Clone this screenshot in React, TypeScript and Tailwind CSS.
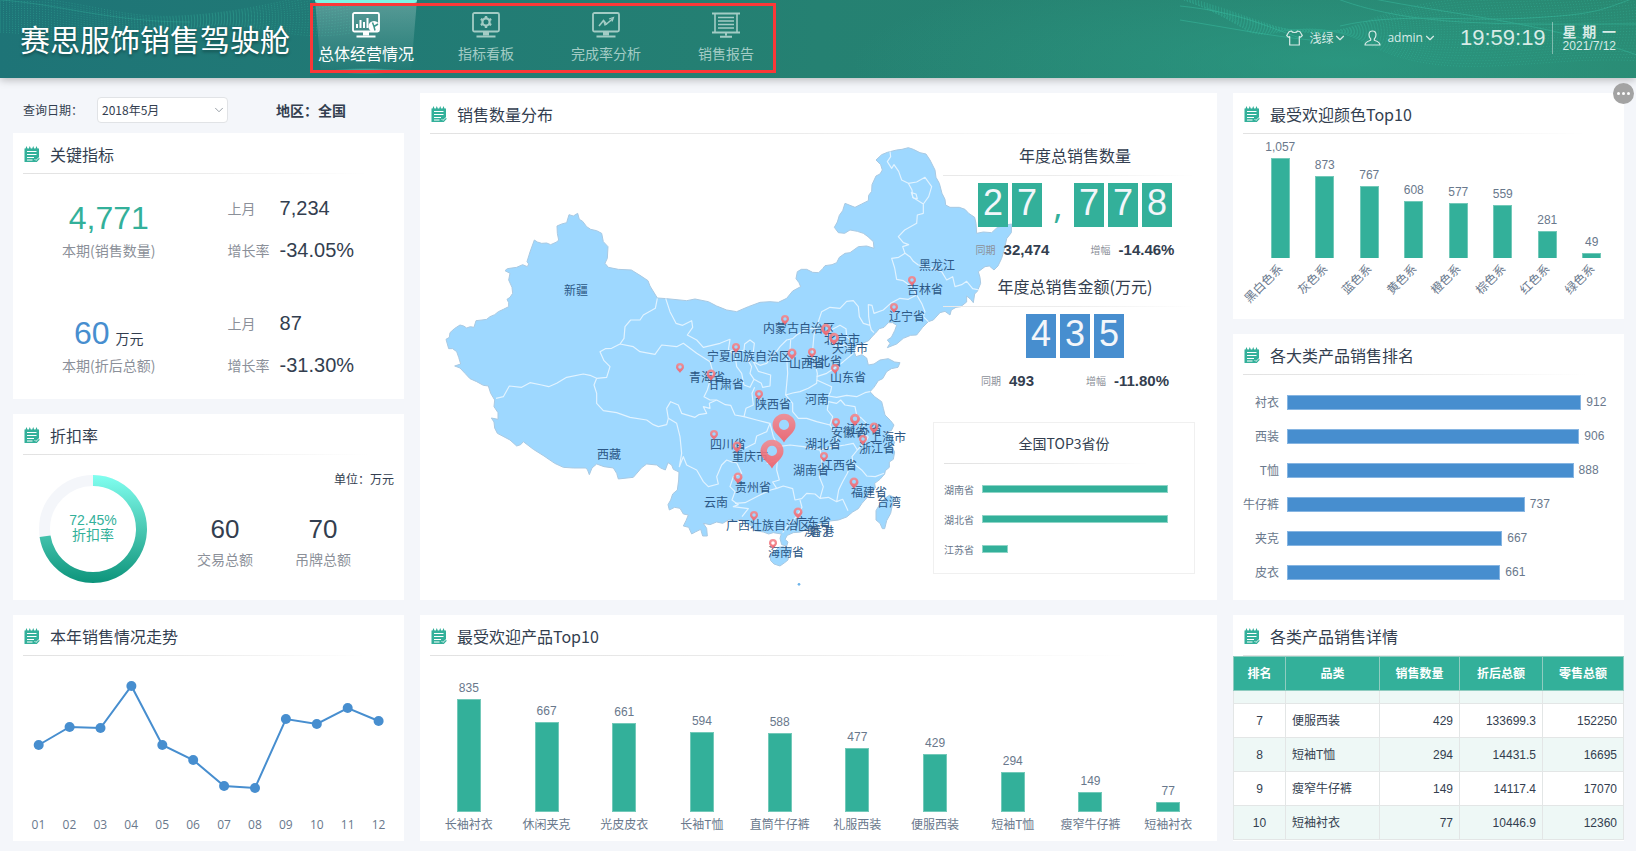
import type { ReactNode } from "react";
import { ChevronDown } from "lucide-react";

type BarItem = { name: string; value: number };

const colorSales: BarItem[] = [
  { name: "黑白色系", value: 1057 },
  { name: "灰色系", value: 873 },
  { name: "蓝色系", value: 767 },
  { name: "黄色系", value: 608 },
  { name: "橙色系", value: 577 },
  { name: "棕色系", value: 559 },
  { name: "红色系", value: 281 },
  { name: "绿色系", value: 49 },
];

const categorySales: BarItem[] = [
  { name: "衬衣", value: 912 },
  { name: "西装", value: 906 },
  { name: "T恤", value: 888 },
  { name: "牛仔裤", value: 737 },
  { name: "夹克", value: 667 },
  { name: "皮衣", value: 661 },
];

const productSales: BarItem[] = [
  { name: "长袖衬衣", value: 835 },
  { name: "休闲夹克", value: 667 },
  { name: "光皮皮衣", value: 661 },
  { name: "长袖T恤", value: 594 },
  { name: "直筒牛仔裤", value: 588 },
  { name: "礼服西装", value: 477 },
  { name: "便服西装", value: 429 },
  { name: "短袖T恤", value: 294 },
  { name: "瘦窄牛仔裤", value: 149 },
  { name: "短袖衬衣", value: 77 },
];

const topProvinces = [
  { name: "湖南省", percent: 92 },
  { name: "湖北省", percent: 92 },
  { name: "江苏省", percent: 13 },
];

const detailRows = [
  { rank: 7, name: "便服西装", count: 429, amount: "133699.3", retail: "152250" },
  { rank: 8, name: "短袖T恤", count: 294, amount: "14431.5", retail: "16695" },
  { rank: 9, name: "瘦窄牛仔裤", count: 149, amount: "14117.4", retail: "17070" },
  { rank: 10, name: "短袖衬衣", count: 77, amount: "10446.9", retail: "12360" },
];

// y position of each month on the trend line
const trend = [88, 70, 71, 29, 88, 103, 129, 131, 62, 67, 51, 64];
const months = ["01", "02", "03", "04", "05", "06", "07", "08", "09", "10", "11", "12"];

// name, x, y
const provinceLabels: [string, number, number][] = [
  ["新疆", 156, 196],
  ["西藏", 189, 360],
  ["青海省", 287, 283],
  ["甘肃省", 306, 290],
  ["宁夏回族自治区", 329, 262],
  ["内蒙古自治区", 379, 234],
  ["山西省", 387, 269],
  ["河北省", 404, 267],
  ["北京市", 422, 245],
  ["天津市", 430, 254],
  ["山东省", 428, 283],
  ["河南", 397, 305],
  ["陕西省", 353, 310],
  ["四川省", 308, 350],
  ["重庆市", 330, 362],
  ["湖北省", 403, 350],
  ["湖南省", 391, 376],
  ["江西省", 419, 371],
  ["安徽省", 429, 338],
  ["江苏省", 444, 335],
  ["上海市", 468, 343],
  ["浙江省", 457, 354],
  ["福建省", 449, 398],
  ["台湾", 469, 408],
  ["贵州省", 333, 393],
  ["云南", 296, 408],
  ["广西壮族自治区", 348, 431],
  ["广东省", 393, 428],
  ["澳门", 396, 437],
  ["香港", 402, 437],
  ["海南省", 366, 458],
  ["黑龙江", 517, 171],
  ["吉林省", 505, 195],
  ["辽宁省", 487, 222],
];

// x, y, width
const pins: [number, number, number][] = [
  [365, 227, 8],
  [316, 255, 8],
  [260, 275, 8],
  [291, 282, 9],
  [339, 302, 8],
  [294, 342, 8],
  [317, 354, 9],
  [318, 385, 9],
  [334, 423, 8],
  [378, 420, 9],
  [353, 451, 8],
  [372, 261, 9],
  [392, 260, 8],
  [406, 237, 10],
  [414, 246, 10],
  [415, 276, 8],
  [416, 330, 8],
  [435, 327, 10],
  [454, 335, 9],
  [443, 347, 8],
  [404, 364, 8],
  [434, 390, 9],
  [492, 188, 8],
  [474, 215, 8],
  [364, 335, 23],
  [352, 361, 23],
];

const mainland =
  "M78 748L88 742 90 728 103 716 120 705 131 708 140 714 151 710 162 712 168 692 186 690 200 688 210 680 224 674 235 665 250 658 266 650 266 638 261 628 270 622 278 610 276 592 266 570 270 550 255 542 262 536 290 532 308 524 322 530 326 522 321 515 330 486 343 450 352 456 365 460 380 459 392 464 410 456 416 450 412 430 411 408 425 402 440 398 447 374 460 378 473 370 478 388 488 394 500 410 512 418 530 422 545 430 550 455 564 470 562 505 555 520 565 532 595 538 634 540 660 556 684 572 690 588 712 624 740 626 800 632 825 627 865 635 890 648 920 660 950 665 985 650 1020 637 1050 635 1075 637 1100 625 1118 603 1142 590 1137 578 1128 566 1132 545 1144 538 1160 538 1178 547 1196 548 1208 536 1215 527 1236 524 1250 518 1258 502 1275 490 1290 488 1315 470 1340 468 1362 475 1360 455 1344 440 1330 430 1312 424 1290 420 1274 430 1255 428 1243 412 1252 396 1258 376 1268 362 1275 340 1290 346 1305 352 1325 342 1345 332 1346 316 1355 304 1356 284 1368 258 1380 252 1387 240 1382 224 1368 210 1385 194 1402 187 1430 180 1446 178 1465 173 1480 178 1500 188 1518 192 1530 210 1545 240 1548 262 1558 280 1566 310 1575 328 1577 345 1590 352 1618 352 1635 358 1646 370 1664 382 1668 400 1670 430 1690 426 1715 428 1730 414 1752 406 1775 402 1774 428 1760 446 1754 474 1745 505 1734 528 1722 540 1708 528 1695 530 1675 545 1680 562 1682 580 1672 604 1664 612 1660 638 1652 628 1640 618 1640 636 1622 650 1608 652 1594 660 1590 675 1575 664 1560 668 1540 690 1525 695 1508 712 1490 735 1472 736 1450 745 1430 762 1402 773 1410 760 1402 750 1414 742 1424 722 1430 706 1418 698 1405 698 1392 712 1378 716 1366 730 1356 740 1346 752 1328 760 1310 764 1302 784 1308 800 1326 794 1340 804 1345 825 1362 822 1380 810 1405 806 1424 816 1440 818 1434 832 1414 836 1400 845 1388 866 1375 872 1362 892 1350 905 1364 920 1385 935 1390 955 1395 975 1412 992 1422 1005 1414 1022 1396 1026 1412 1036 1424 1058 1416 1070 1424 1086 1420 1108 1408 1116 1408 1132 1396 1142 1394 1152 1380 1168 1364 1180 1366 1194 1348 1206 1340 1224 1326 1240 1315 1256 1298 1266 1280 1281 1256 1290 1230 1293 1214 1304 1196 1300 1180 1315 1160 1318 1142 1326 1120 1328 1102 1336 1095 1348 1104 1356 1100 1368 1085 1364 1080 1345 1084 1332 1060 1328 1046 1332 1030 1326 1005 1322 992 1306 980 1300 966 1288 945 1292 925 1290 908 1300 890 1296 870 1304 850 1300 860 1315 862 1338 848 1338 842 1318 826 1326 815 1332 806 1312 790 1308 798 1292 805 1275 790 1272 780 1255 764 1252 748 1260 744 1244 752 1230 758 1212 772 1200 776 1170 777 1146 760 1138 755 1125 744 1118 736 1140 722 1134 710 1125 680 1122 664 1134 654 1146 640 1162 595 1167 590 1150 580 1134 552 1130 530 1122 516 1134 508 1154 502 1138 496 1134 460 1134 430 1132 404 1120 372 1098 340 1078 310 1055 302 1064 290 1068 270 1050 232 1030 224 1014 222 996 214 984 234 988 234 968 222 950 224 930 212 910 205 888 190 886 170 875 150 866 135 850 120 834 104 828 122 822 116 802 110 785 98 776 86 776Z";
const hainan = "M1090 1370L1102 1376 1115 1372 1114 1388 1106 1396 1104 1410 1094 1418 1080 1428 1062 1422 1052 1412 1050 1394 1064 1384 1076 1372Z";
const taiwan = "M1395 1225L1408 1216 1424 1222 1418 1240 1412 1270 1400 1292 1394 1316 1387 1316 1380 1300 1368 1290 1368 1262 1382 1238Z";

const borders = [
  "M712 625L706 655 690 664 670 675 660 690 632 690 615 710 612 745 600 762 575 775 556 776 540 785 552 812 570 830 560 862 530 865",
  "M530 865L510 856 490 852 440 862 410 880 386 890 365 885 330 878 305 892 268 888 250 920 228 925",
  "M530 865L522 885 530 910 530 940 550 962 590 968 630 982 680 990 700 1004 715 1010 740 1004 745 985",
  "M745 985L770 1000 780 1040 785 1090 778 1130 790 1100 800 1125 830 1140 850 1175 865 1190 895 1182 890 1160 905 1125 920 1110 935 1116 950 1118",
  "M745 985L740 955 752 935 775 945 785 970 825 982 836 974 860 970 850 950 870 955 868 940 890 930",
  "M600 762L640 770 660 785 705 793 725 765 770 770 790 760 830 790 870 815 880 850 870 872 862 900 852 920 870 930 890 930",
  "M737 625L750 665 768 700 788 706 815 692 818 712 802 735 830 750 850 772 900 760 930 748 925 780 945 795 950 830 965 850 972 885 990 892 1002 868 1024 880 1028 892 1050 888 1052 855 1015 844 1000 815",
  "M890 930L916 944 932 946 945 975 972 980 978 955 1000 945 996 910 1004 892",
  "M925 780L955 786 972 780 974 762 990 750 1003 760 1000 785 985 812 995 830 990 850 1002 868",
  "M1000 815L1020 826 1040 820 1065 790 1080 770 1100 750 1118 746 1130 735 1160 716 1190 715 1196 692 1205 665 1230 652 1260 655 1280 634 1300 632 1315 650 1318 680 1330 700 1350 706 1346 680 1345 644 1356 646 1362 670 1390 660 1412 640 1440 625 1465 628 1490 615",
  "M1490 615L1475 590 1450 572 1430 568 1424 534 1415 505 1436 502 1455 490 1470 500 1480 514 1495 525",
  "M1455 490L1448 470 1466 464 1450 458 1435 440 1454 420 1490 400 1492 375 1510 370 1510 342 1478 322 1476 300 1465 280 1445 270 1436 244 1422 224 1415 235 1402 215 1412 200 1410 184",
  "M1465 280L1490 276 1515 262 1535 290 1526 320 1510 342M1474 308l14 4 4 14-12 -2z",
  "M1495 525L1530 532 1565 545 1580 570 1598 560 1605 590 1625 584 1640 574 1658 596 1678 600",
  "M1490 615L1505 640 1515 665 1510 680 1525 695",
  "M1350 706L1354 720 1362 728",
  "M1112 750L1110 780 1100 800 1103 850 1097 915 1118 909 1140 905 1165 895 1190 880 1192 850 1185 820 1178 780 1182 735 1196 700",
  "M1190 870L1235 890 1232 905 1225 918 1250 922 1280 916 1310 920 1335 908 1350 905",
  "M1190 860L1220 850 1250 830 1270 815 1300 790M1220 730l20 -14 20 -10 18 10 2 24 14 12 -4 22 -18 -10 -20 6 -22 -14z",
  "M1097 915L1118 940 1118 965 1135 985 1160 985 1190 995 1230 1005 1238 980 1222 960 1225 935 1250 940 1262 930 1275 945 1305 950 1310 975 1325 985 1340 1000 1322 1010 1330 1030 1345 1040",
  "M972 980L1010 990 1050 1000 1040 1025 1010 1038 1005 1060 975 1075",
  "M1050 1000L1060 1040 1075 1070 1110 1065 1150 1070 1175 1076 1200 1080 1245 1070 1252 1040 1230 1005",
  "M1245 1070L1275 1065 1300 1060 1312 1080 1340 1050 1345 1040M1312 1080L1296 1100 1300 1120",
  "M950 1118L965 1150 940 1160 930 1190 945 1205 936 1230 955 1244 940 1250 985 1256 966 1280",
  "M945 1240L975 1238 1020 1215 1052 1200 1070 1195 1058 1176 1078 1170 1070 1140 1072 1110 1040 1120",
  "M1070 1195L1090 1188 1118 1196 1125 1230 1145 1226 1160 1210 1185 1212 1200 1225 1210 1190 1198 1160 1206 1130 1205 1100 1200 1080",
  "M1140 1230L1146 1252 1130 1280 1108 1300 1088 1328",
  "M1200 1225L1225 1222 1250 1235 1268 1228 1284 1262M1250 1235L1256 1200 1268 1175 1282 1150 1290 1130 1300 1120 1325 1140 1340 1158 1366 1160 1392 1150",
];

const cardTitleLine = "h-px bg-linear-to-r from-[#e2e2e2] via-[#ebebeb] to-transparent";

function NoteIcon() {
  return (
    <svg viewBox="0 0 16 16" className="size-4 shrink-0" aria-hidden="true">
      <path d="M.5 2.500h1l1-2.500 1 2.500h1.300l1-2.500 1 2.500h1.400l1-2.500 1 2.500h1.300l1-2.500 1 2.500H15V12l.8.800-3 3.200H.5z" fill="#33b09a" />
      <path d="M3 5.500h9.500M3 8.500h9.500M3 11.500h7M3 14h5.500" stroke="#fff" strokeWidth="1" fill="none" />
      <path d="M10.500 13l1.400 1.400L15 11.500" stroke="#fff" strokeWidth=".8" fill="none" />
    </svg>
  );
}

function Card({ title, className, children }: { title: string; className?: string; children: ReactNode }) {
  return (
    <section className={`relative flex flex-col bg-white ${className ?? ""}`}>
      <div className="flex h-10 shrink-0 items-center gap-2.5 px-[11px] pt-0.5">
        <NoteIcon />
        <h2 className="text-base leading-6 text-[#333e4f]">{title}</h2>
      </div>
      <div className={`ml-2.5 w-[88%] shrink-0 ${cardTitleLine}`} />
      {children}
    </section>
  );
}

function Monitor({ children }: { children: ReactNode }) {
  return (
    <svg viewBox="0 0 28 26" className="h-[26px] w-7" fill="none" stroke="currentColor" aria-hidden="true">
      <rect x="1" y="1" width="26" height="18.500" rx="1.500" strokeWidth="1.800" />
      <path d="M11 20h6v3.500h-6z" fill="currentColor" stroke="none" />
      <path d="M4.500 24.500h19" strokeWidth="2" />
      {children}
    </svg>
  );
}

const navItems = [
  {
    label: "总体经营情况",
    icon: (
      <Monitor>
        <path d="M5 16v-4M8.500 16V8M12 16v-6M15.500 16V6" strokeWidth="2" />
        <circle cx="22" cy="14.500" r="5.500" fill="currentColor" stroke="none" />
        <path d="M22 14.500L20.500 10.500M22 14.500l4-2.500M22 14.500l1 4" stroke="#3b958b" strokeWidth="1.500" />
      </Monitor>
    ),
  },
  {
    label: "指标看板",
    icon: (
      <Monitor>
        <circle cx="14" cy="10" r="3.600" strokeWidth="2.200" />
        <path d="M14 4v2.500M14 13.500V16M8.800 7l2.200 1.300M17 11.700l2.200 1.300M8.800 13l2.200-1.300M17 8.300L19.200 7" strokeWidth="2.400" />
      </Monitor>
    ),
  },
  {
    label: "完成率分析",
    icon: (
      <Monitor>
        <path d="M7 14l4.500-5.500 3 3.500L21 6.500" strokeWidth="1.600" />
        <path d="M11.500 8.500L13 13l2-1.500M17 7l4.500-1.500L20 9.500" strokeWidth="1.200" />
      </Monitor>
    ),
  },
  {
    label: "销售报告",
    icon: (
      <svg viewBox="0 0 28 26" className="h-[26px] w-7" fill="none" stroke="currentColor" aria-hidden="true">
        <path d="M0 1.500h28" strokeWidth="2" />
        <path d="M3 2v18M25 2v18" strokeWidth="1.600" />
        <path d="M0 20.500h28" strokeWidth="2" />
        <path d="M6 5.500h16M6 9h16M6 12.500h16M6 16h16" strokeWidth="1.600" />
        <path d="M14 21v2.500M8 24.800h12" strokeWidth="2" />
      </svg>
    ),
  },
];

function HeaderWaves() {
  const left = Array.from({ length: 16 }, (_, i) => i);
  const right = Array.from({ length: 26 }, (_, i) => i);
  return (
    <svg
      viewBox="0 0 1636 78"
      preserveAspectRatio="none"
      className="pointer-events-none absolute inset-0 size-full"
      fill="none"
      stroke="#3cc7aa"
      aria-hidden="true"
    >
      <g strokeDasharray="1 2" opacity=".3">
        {left.map((i) => (
          <path key={i} d={`M0 ${2 + i * 2}C60 ${i * 3 - 10} 110 ${20 + i * 2} 180 ${16 + i}S280 ${i * 3} 350 ${-12 + i * 3}`} />
        ))}
      </g>
      <g strokeDasharray="1 2" opacity=".32">
        {right.map((i) => (
          <path key={i} d={`M${1160 + i * 3} ${-8 + i}C1260 ${10 + i * 2} 1290 ${54 - i * 2} 1370 ${20 + i}S1540 ${4 + i * 2} 1640 ${-14 + i * 3}`} />
        ))}
      </g>
      <g opacity=".4">
        <path d="M1180 6C1240 12 1270 28 1300 38M1180 20C1230 28 1270 36 1310 40" />
        <path d="M1330 -4C1410 28 1500 24 1640 24M1350 -6C1440 14 1540 20 1640 56" />
        <path d="M1340 26C1400 12 1460 22 1530 18S1600 10 1640 -4" />
      </g>
      <path d="M0 0C60 4 110 22 190 22" opacity=".25" />
    </svg>
  );
}

function Header() {
  return (
    <header className="relative z-10 flex h-[78px] bg-linear-to-r from-[#1e7477] via-[#258172] to-[#29866f] shadow-[0_2px_8px_rgba(0,0,0,0.25)]">
      <div className="absolute inset-0 bg-[radial-gradient(ellipse_30%_130%_at_82%_80%,rgba(45,164,140,0.55),transparent)]" />
      <HeaderWaves />
      <h1 className="relative ml-5 w-[270px] shrink-0 text-[30px] leading-[76px] whitespace-nowrap text-white [text-shadow:0_2px_3px_rgba(0,0,0,0.35)]">
        赛思服饰销售驾驶舱
      </h1>
      <nav className="relative ml-4 flex shrink-0">
        {navItems.map((item, i) => (
          <a
            key={item.label}
            href="#"
            className={
              i === 0
                ? "relative flex w-[120px] flex-col items-center pt-3 text-base leading-[30px] text-white"
                : "relative flex w-[120px] flex-col items-center pt-3 text-sm leading-[30px] text-[#a3ccc5]"
            }
          >
            {i === 0 && (
              <>
                <span className="absolute inset-x-[9px] top-0 h-[72px] bg-linear-to-b from-white/25 to-transparent [clip-path:polygon(0_0,100%_0,94%_100%,6%_100%)]" />
                <span className="absolute inset-x-[9px] top-0 h-[3px] rounded-b bg-[#7ff5e4]" />
                <span className="absolute inset-x-6 bottom-1 h-1.5 bg-[radial-gradient(ellipse_at_center,rgba(127,245,228,0.7),transparent_70%)]" />
              </>
            )}
            <span className="relative">{item.icon}</span>
            <span className="relative">{item.label}</span>
          </a>
        ))}
        <span className="pointer-events-none absolute top-[3px] left-1 h-[70px] w-[466px] border-3 border-[#fb3838]" />
      </nav>

      <div className="relative ml-auto flex items-center pr-5 pb-0.5 text-xs text-[#d8ebe7]">
        <button type="button" className="flex items-center gap-1.5">
          <svg viewBox="0 0 17 16" className="h-4 w-[17px]" fill="none" stroke="currentColor" strokeWidth="1.200" strokeLinejoin="round" aria-hidden="true">
            <path d="M5.500 1C6 3 11 3 11.500 1L14 1.800 16.300 5.500 14.500 7.200 13.300 6.500V15H3.700V6.500L2.500 7.200.7 5.500 3 1.800z" />
          </svg>
          <span className="flex items-center">
            浅绿
            <ChevronDown className="size-[14px]" strokeWidth={2} />
          </span>
        </button>
        <button type="button" className="ml-[17px] flex items-center gap-1.5">
          <svg viewBox="0 0 17 16" className="h-4 w-[17px]" fill="none" stroke="currentColor" strokeWidth="1.200" strokeLinejoin="round" aria-hidden="true">
            <path d="M8.500 1C6.200 1 5 2.600 5 4.800c0 2 .8 3.300 1.700 4.200v1.300C4.500 11 1 11.800 1 15h15c0-3.200-3.500-4-5.700-4.700V9c.9-.9 1.700-2.200 1.700-4.200C12 2.600 10.800 1 8.500 1z" />
          </svg>
          <span className="flex items-center font-['Open_Sans',sans-serif]">
            admin
            <ChevronDown className="size-[14px]" strokeWidth={2} />
          </span>
        </button>
        <time className="ml-[23px] font-['Liberation_Sans',sans-serif] text-[22px]">19:59:19</time>
        <span className="ml-1.5 h-8 w-px bg-white/40" />
        <div className="ml-2.5 leading-[15px]">
          <p className="flex justify-between text-sm leading-4 font-bold">
            <span>星</span> <span>期</span> <span>一</span>
          </p>
          <p className="font-['Liberation_Sans',sans-serif]">2021/7/12</p>
        </div>
      </div>
    </header>
  );
}

function Filters() {
  return (
    <div className="mb-[-8px] flex h-[33px] items-center pl-2.5 text-xs text-[#333e4f]">
      <label htmlFor="month" className="w-[74px]">
        查询日期：
      </label>
      <div className="relative">
        <select
          id="month"
          className="h-[26px] w-[131px] appearance-none rounded-sm border border-[#e1e3e6] bg-white pl-1 text-xs"
          defaultValue="2018-05"
        >
          <option value="2018-05">2018年5月</option>
        </select>
        <ChevronDown className="pointer-events-none absolute top-1.5 right-0.5 size-[14px] text-[#8a929c]" strokeWidth={1.500} />
      </div>
      <p className="ml-12 text-sm font-bold">地区：全国</p>
    </div>
  );
}

function Indicator(props: { value: string; unit?: string; tone: string; label: string; last: string; growth: string }) {
  return (
    <div className="flex h-[84px]">
      <div className="flex w-[49%] flex-col items-center justify-center gap-0.5">
        <p className="flex items-baseline gap-1.5 leading-10">
          <span className={`font-['Liberation_Sans',sans-serif] text-[32px] ${props.tone}`}>{props.value}</span>
          {props.unit && <span className="text-sm text-[#333e4f]">{props.unit}</span>}
        </p>
        <p className="text-sm leading-5 text-[#8b9099]">{props.label}</p>
      </div>
      <dl className="grid grid-cols-[52px_1fr] grid-rows-2 items-center pl-[23px] text-sm">
        <dt className="text-[#8b9099]">上月</dt>
        <dd className="font-['Liberation_Sans',sans-serif] text-xl text-[#333e4f]">{props.last}</dd>
        <dt className="text-[#8b9099]">增长率</dt>
        <dd className="font-['Liberation_Sans',sans-serif] text-xl text-[#333e4f]">{props.growth}</dd>
      </dl>
    </div>
  );
}

function DiscountRing() {
  const r = 48.5;
  const length = 2 * Math.PI * r;
  return (
    <div className="relative size-27">
      <svg viewBox="0 0 108 108" className="size-full" fill="none" strokeWidth="11" aria-hidden="true">
        <defs>
          <linearGradient id="ring" gradientUnits="userSpaceOnUse" x1="0" y1="0" x2="0" y2="108">
            <stop offset="0" stopColor="#80fff0" />
            <stop offset=".5" stopColor="#4ac8b3" />
            <stop offset="1" stopColor="#0d947b" />
          </linearGradient>
        </defs>
        <circle cx="54" cy="54" r={r} stroke="#f4f6fa" />
        <path
          d="M54 5.500A48.500 48.500 0 1 1 53.990 5.500"
          stroke="url(#ring)"
          strokeDasharray={`${length * 0.7245} ${length}`}
        />
      </svg>
      <div className="absolute inset-0 flex flex-col items-center justify-center pb-1 text-sm leading-[14px] text-[#33b09a]">
        <span className="font-['Liberation_Sans',sans-serif]">72.45%</span>
        <span>折扣率</span>
      </div>
    </div>
  );
}

function ChinaMap() {
  return (
    <svg viewBox="0 0 797 507" className="absolute inset-0 w-full" role="img" aria-label="销售数量分布">
      <defs>
        <linearGradient id="pin" x1="0" y1="0" x2="0" y2="1">
          <stop offset="0" stopColor="#f28c92" />
          <stop offset="1" stopColor="#f0606a" />
        </linearGradient>
      </defs>
      <g transform="translate(0 -3) scale(0.33333)" strokeLinejoin="round">
        <g fill="#9ed8ff" stroke="#a9c9e2" strokeWidth="3">
          <path d={mainland} />
          <path d={hainan} />
          <path d={taiwan} />
        </g>
        <g fill="none" stroke="#e2f3ff" strokeWidth="3.500">
          {borders.map((d) => (
            <path key={d} d={d} />
          ))}
        </g>
        <circle cx="1137" cy="1483" r="4" fill="#6db4ea" />
      </g>
      <g className="text-xs" fill="#2c5785" textAnchor="middle" dominantBaseline="central">
        {provinceLabels.map(([name, x, y]) => (
          <text key={name} x={x} y={y}>
            {name}
          </text>
        ))}
      </g>
      <g fill="url(#pin)" fillRule="evenodd" opacity=".92">
        {pins.map(([x, y, w]) => (
          <path
            key={`${x}-${y}`}
            transform={`translate(${x - w / 2} ${y - w * 0.625}) scale(${w / 24})`}
            d="M12 30C9 24 0 20 0 12A12 12 0 0 1 24 12C24 20 15 24 12 30ZM12 6.500A5.300 5.300 0 1 0 12 17.100A5.300 5.300 0 1 0 12 6.500Z"
          />
        ))}
      </g>
    </svg>
  );
}

function YearTotal(props: { title: string; value: string; tone: string; last: string; growth: string }) {
  return (
    <div className="pl-[22px]">
      <h3 className="text-center text-base leading-[39px] text-[#333e4f]">{props.title}</h3>
      <div className="-ml-3 h-px bg-linear-to-r from-[#e9e9e9] via-[#ededed] to-transparent" />
      <p className="mt-[7px] flex justify-center gap-1 text-center font-['Liberation_Sans',sans-serif] text-4xl leading-[39px]">
        {props.value.split("").map((char, i) =>
          char === "," ? (
            <span key={i} className="w-6 pt-0.5 font-['Open_Sans',sans-serif] text-[#33b09a]">
              ,
            </span>
          ) : (
            <span key={i} className={`h-11 w-[30px] text-[#f3f6fa] ${props.tone}`}>
              {char}
            </span>
          ),
        )}
      </p>
      <div className="flex h-10 justify-around pt-3 text-[10px] leading-[22px] text-[#8b9099]">
        <p className="flex gap-2">
          同期
          <b className="font-['Liberation_Sans',sans-serif] text-[15px] text-[#333e4f]">{props.last}</b>
        </p>
        <p className="flex gap-2">
          增幅
          <b className="font-['Liberation_Sans',sans-serif] text-[15px] text-[#333e4f]">{props.growth}</b>
        </p>
      </div>
    </div>
  );
}

function TopProvinces() {
  return (
    <div className="mt-6 h-[152px] border border-[#f0f0f0] bg-white px-2.5">
      <h3 className="text-center text-sm leading-10 text-[#333e4f]">全国TOP3省份</h3>
      <div className={`w-[85%] ${cardTitleLine}`} />
      <ul className="mt-2.5 text-[10px] text-[#69788c]">
        {topProvinces.map((item) => (
          <li key={item.name} className="flex h-[30px] items-center gap-2">
            <span className="w-[30px] whitespace-nowrap">{item.name}</span>
            <span className="flex-1">
              <span className="block h-2 border border-[#8fd5c7] bg-[#33b09a]" style={{ width: `${item.percent}%` }} />
            </span>
          </li>
        ))}
      </ul>
    </div>
  );
}

function ColorChart() {
  return (
    <ul className="flex h-[124px] items-end pr-2.5 pl-[25px] text-xs leading-[22px] text-[#69788c]">
      {colorSales.map((item) => (
        <li key={item.name} className="relative flex flex-1 flex-col items-center">
          <span className="font-['Liberation_Sans',sans-serif]">{item.value.toLocaleString("en-US")}</span>
          <span className="w-[19px] border border-b-0 border-[#73c9b9] bg-[#33b09a]" style={{ height: item.value * 0.0945 }} />
          <span className="absolute top-full right-1/2 mt-[-3px] origin-right -rotate-45 whitespace-nowrap">{item.name}</span>
        </li>
      ))}
    </ul>
  );
}

function CategoryChart() {
  return (
    <ul className="mt-2.5 pr-2.5 text-xs text-[#69788c]">
      {categorySales.map((item) => (
        <li key={item.name} className="flex h-[34px] items-center">
          <span className="w-[46px] shrink-0 text-right whitespace-nowrap">{item.name}</span>
          <span className="ml-2 flex flex-1 items-center gap-[5px]">
            <span
              className="h-[15px] shrink-0 border border-[#86b5e2] bg-[#478ecf]"
              style={{ width: `${(item.value / 912) * 90}%` }}
            />
            <span className="font-['Liberation_Sans',sans-serif]">{item.value}</span>
          </span>
        </li>
      ))}
    </ul>
  );
}

function ProductChart() {
  return (
    <ul className="flex h-[180px] items-end px-2.5 text-xs text-[#69788c]">
      {productSales.map((item) => (
        <li key={item.name} className="flex flex-1 flex-col items-center">
          <span className="font-['Liberation_Sans',sans-serif] leading-[22px]">{item.value}</span>
          <span className="w-6 border border-[#73c9b9] bg-[#33b09a]" style={{ height: item.value * 0.135 }} />
          <span className="h-6 leading-6 whitespace-nowrap">{item.name}</span>
        </li>
      ))}
    </ul>
  );
}

function TrendChart() {
  const points = trend.map((y, i) => [25.7 + i * 30.9, y]);
  return (
    <>
      <svg viewBox="0 0 391 156" className="mt-px w-full" fill="#478ecf" aria-hidden="true">
        <polyline points={points.map((p) => p.join(",")).join(" ")} fill="none" stroke="#478ecf" strokeWidth="2" />
        {points.map(([x, y]) => (
          <circle key={x} cx={x} cy={y} r="5" />
        ))}
      </svg>
      <ul className="flex px-2.5 text-center font-['Open_Sans',sans-serif] text-xs leading-6 text-[#69788c]">
        {months.map((month) => (
          <li key={month} className="flex-1">
            {month}
          </li>
        ))}
      </ul>
    </>
  );
}

function DetailTable() {
  return (
    <table className="w-full table-fixed border-collapse border border-[#e3e6e6] text-xs text-[#333e4f]">
      <colgroup>
        <col className="w-[52px]" />
        <col className="w-[94px]" />
        <col className="w-20" />
        <col className="w-[83px]" />
        <col />
      </colgroup>
      <thead>
        <tr className="h-[34px] bg-[#33b09a] text-white">
          {["排名", "品类", "销售数量", "折后总额", "零售总额"].map((name) => (
            <th key={name} className="border border-[#8fccc0] pb-0.5 font-bold">
              {name}
            </th>
          ))}
        </tr>
      </thead>
      <tbody className="text-right font-['Liberation_Sans','Noto_Sans_CJK_SC',sans-serif]">
        <tr className="h-[13px] bg-[#eef8f6]">
          {[0, 1, 2, 3, 4].map((i) => (
            <td key={i} className="border border-[#e3e6e6]" />
          ))}
        </tr>
        {detailRows.map((row) => (
          <tr key={row.rank} className="h-[34px] even:bg-white odd:bg-[#eef8f6]">
            <td className="border border-[#e3e6e6] text-center">{row.rank}</td>
            <td className="border border-[#e3e6e6] px-1.5 text-left">{row.name}</td>
            <td className="border border-[#e3e6e6] px-1.5">{row.count}</td>
            <td className="border border-[#e3e6e6] px-1.5">{row.amount}</td>
            <td className="border border-[#e3e6e6] px-1.5">{row.retail}</td>
          </tr>
        ))}
      </tbody>
    </table>
  );
}

export default function App() {
  return (
    <div className="relative min-h-screen bg-[#f4f6fa] font-['Noto_Sans_CJK_SC',sans-serif]">
      <Header />
      <main className="grid grid-cols-[minmax(0,391fr)_minmax(0,797fr)_minmax(0,391fr)] gap-x-4 gap-y-[15px] pt-[15px] pr-3 pb-2.5 pl-[13px]">
        <div className="flex flex-col gap-[15px]">
          <Filters />
          <Card title="关键指标" className="min-h-[266px]">
            <div className="mt-[13px] flex flex-col gap-[31px]">
              <Indicator value="4,771" tone="text-[#33b09a]" label="本期(销售数量)" last="7,234" growth="-34.05%" />
              <Indicator value="60" unit="万元" tone="text-[#478ecf]" label="本期(折后总额)" last="87" growth="-31.30%" />
            </div>
          </Card>
          <Card title="折扣率" className="flex-1">
            <p className="pt-3 pr-2.5 text-right text-xs leading-6 text-[#333e4f]">单位：万元</p>
            <div className="mt-[-16px] flex pl-[26px]">
              <DiscountRing />
              <div className="ml-[29px] flex w-[196px] pt-9 text-center text-sm leading-6 text-[#8b9099]">
                <p className="flex-1">
                  <span className="block font-['Liberation_Sans',sans-serif] text-[26px] leading-9 text-[#333e4f]">60</span>
                  交易总额
                </p>
                <p className="flex-1">
                  <span className="block font-['Liberation_Sans',sans-serif] text-[26px] leading-9 text-[#333e4f]">70</span>
                  吊牌总额
                </p>
              </div>
            </div>
          </Card>
        </div>

        <Card title="销售数量分布" className="min-h-[507px]">
          <ChinaMap />
          <div className="relative mt-0.5 mr-[22px] w-[262px] self-end">
            <YearTotal title="年度总销售数量" value="27,778" tone="bg-[#33b09a]" last="32,474" growth="-14.46%" />
            <YearTotal title="年度总销售金额(万元)" value="435" tone="bg-[#478ecf]" last="493" growth="-11.80%" />
            <TopProvinces />
          </div>
        </Card>

        <div className="flex flex-col gap-[15px]">
          <Card title="最受欢迎颜色Top10" className="h-[226px]">
            <ColorChart />
          </Card>
          <Card title="各大类产品销售排名" className="flex-1">
            <CategoryChart />
          </Card>
        </div>

        <Card title="本年销售情况走势" className="min-h-[226px]">
          <TrendChart />
        </Card>
        <Card title="最受欢迎产品Top10">
          <ProductChart />
        </Card>
        <Card title="各类产品销售详情">
          <DetailTable />
        </Card>
      </main>

      <button
        type="button"
        aria-label="更多"
        className="absolute top-[83px] right-0.5 z-20 flex size-[21px] items-center justify-center gap-0.5 rounded-full bg-[#a3a3a3]"
      >
        <i className="size-[3px] rounded-full bg-white" />
        <i className="size-[3px] rounded-full bg-white" />
        <i className="size-[3px] rounded-full bg-white" />
      </button>
    </div>
  );
}
